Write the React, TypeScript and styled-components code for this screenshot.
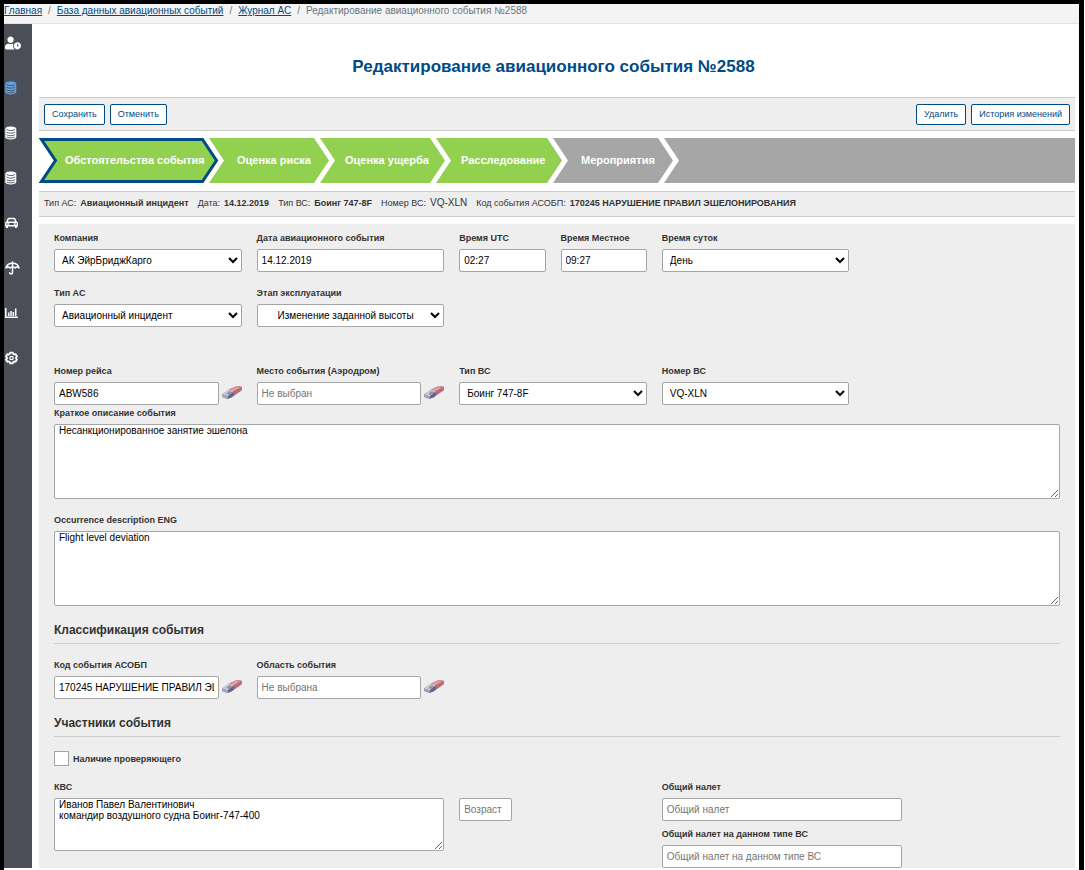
import React from "react";
import styled, { createGlobalStyle } from "styled-components";
import { FaUserClock } from "react-icons/fa";

const blue = "#004a86";
const green = "#92d050";
const grey = "#a6a6a6";

const GlobalStyle = createGlobalStyle`
  *, *::before, *::after { box-sizing: border-box; }
  html, body { height: 100%; margin: 0; overflow: hidden; }
  body { background: #fff; font-family: "Liberation Sans", Arial, sans-serif; font-size: 10px; color: #333; }
  #root { height: 100%; }
  input, textarea, select, button { font-family: inherit; margin: 0; }
`;

const Frame = styled.div`
  height: 100%;
  margin-right: 1px;
  border: solid #000;
  border-width: 4px 5px 0 4px;
  padding-bottom: 2px;
  background: #fff;
  display: flex;
  flex-direction: column;
`;

const Crumbs = styled.nav`
  flex: none;
  height: 20px;
  padding-bottom: 6px;
  display: flex;
  align-items: center;
  gap: 6px;
  overflow: hidden;
  white-space: nowrap;
  background: #f4f4f4;
  border-bottom: 1px solid #e0e0e0;
  font-size: 10px;
  line-height: 13px;
  color: #6c757d;
  a { color: ${blue}; text-decoration: underline; }
`;

const Body = styled.div`
  flex: 1;
  min-height: 0;
  display: flex;
`;

const Sidebar = styled.nav`
  flex: none;
  width: 28px;
  background: #4b4e57;
  padding: 11px 0 0 1px;
  display: flex;
  flex-direction: column;
  gap: 29px;
`;

const SideLink = styled.a<{ $active?: boolean }>`
  display: flex;
  align-items: center;
  height: 16px;
  color: ${p => (p.$active ? "#5ea4e6" : "#fff")};
`;

const Main = styled.main`
  flex: 1;
  min-width: 0;
  padding: 0 4px 0 7px;
  display: flex;
  flex-direction: column;
`;

const Title = styled.h1`
  flex: none;
  margin: 0;
  padding: 32px 7px 20px 0;
  text-align: center;
  font-size: 17px;
  line-height: 21px;
  color: ${blue};
`;

const Toolbar = styled.div`
  flex: none;
  height: 34px;
  padding: 0 5px;
  display: flex;
  align-items: center;
  justify-content: space-between;
  background: #eee;
  border: solid #ccc;
  border-width: 1px 0;
`;

const ButtonGroup = styled.div`
  display: flex;
  gap: 5px;
`;

const Button = styled.button`
  height: 21px;
  padding: 0 7px 1px;
  border: 1px solid ${blue};
  border-radius: 2px;
  background: #fff;
  color: ${blue};
  font-size: 9px;
  line-height: 12px;
  white-space: nowrap;
`;

const Steps = styled.ol`
  flex: none;
  list-style: none;
  margin: 7px 0 8px;
  padding: 0;
  height: 45px;
  display: flex;
  background: ${grey};
`;

const Step = styled.li<{ $done?: boolean; $w: number }>`
  position: relative;
  flex: none;
  width: ${p => p.$w}px;
  background: ${p => (p.$done ? green : grey)};
  display: flex;
  svg { position: absolute; top: 0; z-index: 1; pointer-events: none; }
`;

const StepButton = styled.button<{ $pad: number }>`
  position: relative;
  z-index: 2;
  border: 0;
  padding: 0 0 1px ${p => p.$pad}px;
  background: none;
  color: #fff;
  font-size: 11px;
  font-weight: bold;
  white-space: nowrap;
`;

const Summary = styled.dl`
  flex: none;
  height: 26px;
  margin: 0 0 7px;
  padding: 0 5px 2px;
  display: flex;
  align-items: center;
  gap: 9px;
  background: #eee;
  border: solid #ccc;
  border-width: 1px 0;
  font-size: 9px;
  line-height: 12px;
  white-space: nowrap;
  div { display: flex; align-items: baseline; gap: 4px; }
  dt { margin: 0; }
`;

const SummaryValue = styled.dd<{ $plain?: boolean }>`
  margin: 0;
  font-size: ${p => (p.$plain ? 10 : 9)}px;
  font-weight: ${p => (p.$plain ? "normal" : "bold")};
`;

const Form = styled.form`
  flex: 1;
  min-height: 0;
  overflow: hidden;
  background: #eee;
  padding: 7px 15px 0;
`;

const Row = styled.div<{ $h: number }>`
  display: grid;
  grid-template-columns: repeat(10, minmax(0, 1fr));
  column-gap: 15px;
  align-items: start;
  padding-right: 8px;
  min-height: ${p => p.$h}px;
`;

const Cell = styled.div<{ $span?: number }>`
  grid-column: span ${p => p.$span ?? 2};
`;

const Label = styled.label`
  display: block;
  padding-bottom: 4px;
  font-size: 9px;
  line-height: 14px;
  font-weight: bold;
  white-space: nowrap;
`;

const Input = styled.input`
  display: block;
  width: 100%;
  min-width: 0;
  height: 23px;
  padding: 0 4px;
  border: 1px solid #a6a6a6;
  border-radius: 2px;
  background: #fff;
  color: #000;
  font-size: 10px;
  &::placeholder { color: #757575; opacity: 1; }
`;

const Select = styled.select<{ $indent?: boolean }>`
  display: block;
  width: 100%;
  height: 23px;
  padding: 0 0 0 ${p => (p.$indent ? 16 : 3)}px;
  border: 1px solid #a6a6a6;
  border-radius: 2px;
  background: #fff;
  color: #000;
  font-size: 10px;
`;

const TextArea = styled.textarea<{ $h: number }>`
  display: block;
  width: 100%;
  height: ${p => p.$h}px;
  padding: 0 4px;
  border: 1px solid #a6a6a6;
  border-radius: 2px;
  background: #fff;
  color: #000;
  font-size: 10px;
  line-height: 11px;
  resize: both;
`;

const Block = styled.div<{ $gap: number }>`
  padding-bottom: ${p => p.$gap}px;
`;

const SectionTitle = styled.h2`
  margin: 0 0 14px;
  height: 28px;
  border-bottom: 1px solid #ccc;
  font-size: 12px;
  line-height: 16px;
  padding-top: 6px;
`;

const Erasable = styled.div`
  display: flex;
  align-items: center;
  gap: 3px;
`;

const EraseButton = styled.button`
  flex: none;
  width: 20px;
  padding: 0 0 2px;
  border: 0;
  background: none;
  display: flex;
`;

const Check = styled.div`
  display: flex;
  align-items: center;
  gap: 4px;
  padding-bottom: 14px;
  input {
    appearance: none;
    width: 15px;
    height: 15px;
    margin: 0;
    border: 1px solid #a6a6a6;
    background: #fff;
  }
  label { padding: 0; }
`;

const Narrow = styled.div`
  width: 53px;
  padding-top: 18px;
`;

const Totals = styled.div`
  width: 240px;
`;

const DatabaseIcon = () => (
  <svg width="12" height="14" viewBox="0 0 12 14" fill="currentColor">
    <path d="M.3 3C.3-.3 11.300-.3 11.300 3v8c0 3.300-11 3.300-11 0z" />
    <path d="M1.500 3.400c1.800 1.500 6.800 1.500 8.600 0M1.500 6c1.800 1.500 6.800 1.500 8.600 0M1.500 8.600c1.800 1.500 6.800 1.500 8.600 0M2 11c1.800 1.200 5.800 1.200 7.600 0" fill="none" stroke="#4b4e57" strokeWidth="0.9" />
  </svg>
);

const CarIcon = () => (
  <svg width="13" height="12" viewBox="0 0 13 12" fill="none" stroke="currentColor" strokeWidth="1.400">
    <path d="M2 5 3 2.200Q3.300 1.500 4 1.500h5q.7 0 1 .7L11 5" />
    <path d="M1.500 5.200h10q.7 0 .7.8v2.800H.8V6q0-.8.7-.8z" />
    <path d="M2 9v2M11 9v2" strokeWidth="2" />
    <path d="M2.300 7h2M8.700 7h2" />
  </svg>
);

const UmbrellaIcon = () => (
  <svg width="15" height="14" viewBox="0 0 15 14" fill="none" stroke="currentColor" strokeWidth="1.500" strokeLinecap="round" strokeLinejoin="round">
    <path d="M1 7C1.800 3.700 4.300 2.300 7.500 2.300S13.200 3.700 14 7c-1.500-1.400-2.900-1.400-4 0-1.400-1.800-3.600-1.800-5 0-1.100-1.400-2.500-1.400-4 0z" />
    <path d="M7.500 1v10.500c0 2-2.800 2-2.800.2" />
  </svg>
);

const ChartIcon = () => (
  <svg width="13" height="12" viewBox="0 0 13 12" fill="none" stroke="currentColor">
    <path d="M.8 1v9.300h12" strokeWidth="1.500" />
    <path d="M3.700 9V5.500M6 9V4M8.300 9V5M10.700 9V1.500" strokeWidth="1.500" />
  </svg>
);

const GearIcon = () => (
  <svg width="13" height="14" viewBox="0 0 14 14" fill="none" stroke="currentColor">
    <path d="M5.600 1.200h2.800l.5 1.500 1 .6 1.600-.4 1.400 2.400L11.800 6.500v1l1.100 1.200-1.400 2.400-1.600-.4-1 .6-.5 1.500H5.600l-.5-1.500-1-.6-1.600.4L1.100 8.700l1.100-1.200v-1L1.100 5.300l1.400-2.400 1.600.4 1-.6z" strokeWidth="1.900" strokeLinejoin="round" />
    <circle cx="7" cy="7" r="1.800" strokeWidth="1.400" />
  </svg>
);

const EraserIcon = () => (
  <svg width="20" height="13" viewBox="0 0 20 13">
    <path d="M0 8.500 7.500 3.200 13.500.4Q19.500-.4 20 1.200l-.2 3L9.500 11.500 5.500 13 .4 11.200z" fill="#8a8494" />
    <path d="M.4 8.600 7.300 3.500l4.400 2-5.600 4.700z" fill="#c9ccd8" />
    <path d="M7.300 3.500 13.500.7q5-.9 6.200.4l-8 4.600z" fill="#dd8488" />
    <path d="m8.600 4 6-2.700 2.200.2-6.400 3.400z" fill="#eba9aa" />
    <path d="m11.700 5.600 8.100-4.500-.1 3-8.100 5.400z" fill="#bb6c74" />
    <path d="m6.100 10.200 5.600-4.700-.1 4.200-2.200 1.600-3.900 1.500z" fill="#5b6388" />
    <path d="m4.500 7.500 3-2.400 3 1.300-3.700 3.100z" fill="#8d94b4" />
    <path d="m.4 8.800 5.700 1.500-.6 2.500-5-1.800z" fill="#a3a8bd" />
  </svg>
);

const Chevron = ({ left, fill }: { left: number; fill: string }) => (
  <svg style={{ left }} width="22" height="45" viewBox="0 0 22 45">
    <path d="M0 0 15 22.500 0 45z" fill={fill} />
    <path d="M0 0h6l15 22.500L6 45H0l15-22.500z" fill="#fff" />
  </svg>
);

const steps = [
  { name: "Обстоятельства события", w: 169, pad: 26, done: true },
  { name: "Оценка риска", w: 111, pad: 29, done: true },
  { name: "Оценка ущерба", w: 116, pad: 26, done: true },
  { name: "Расследование", w: 117, pad: 26, done: true },
  { name: "Мероприятия", w: 111, pad: 29, done: false },
];

type FieldProps = { id: string; label: string; value?: string; placeholder?: string };

const TextField = ({ id, label, value, placeholder }: FieldProps) => (
  <>
    <Label htmlFor={id}>{label}</Label>
    <Input id={id} defaultValue={value} placeholder={placeholder} />
  </>
);

const ErasableField = ({ id, label, value, placeholder }: FieldProps) => (
  <>
    <Label htmlFor={id}>{label}</Label>
    <Erasable>
      <Input id={id} defaultValue={value} placeholder={placeholder} />
      <EraseButton type="button" aria-label={`Очистить: ${label}`}><EraserIcon /></EraseButton>
    </Erasable>
  </>
);

const SelectField = ({ id, label, value, indent }: FieldProps & { indent?: boolean }) => (
  <>
    <Label htmlFor={id}>{label}</Label>
    <Select id={id} $indent={indent}><option>{value}</option></Select>
  </>
);

export default function App() {
  return (
    <>
      <GlobalStyle />
      <Frame>
        <Crumbs>
          <a href="#home">Главная</a><span>/</span>
          <a href="#db">База данных авиационных событий</a><span>/</span>
          <a href="#journal">Журнал АС</a><span>/</span>
          <span>Редактирование авиационного события №2588</span>
        </Crumbs>
        <Body>
          <Sidebar>
            <SideLink href="#users" aria-label="Пользователи"><FaUserClock size={16} /></SideLink>
            <SideLink href="#events" aria-label="События" $active><DatabaseIcon /></SideLink>
            <SideLink href="#data1" aria-label="База данных"><DatabaseIcon /></SideLink>
            <SideLink href="#data2" aria-label="Справочники"><DatabaseIcon /></SideLink>
            <SideLink href="#cars" aria-label="Транспорт"><CarIcon /></SideLink>
            <SideLink href="#safety" aria-label="Безопасность"><UmbrellaIcon /></SideLink>
            <SideLink href="#charts" aria-label="Отчёты"><ChartIcon /></SideLink>
            <SideLink href="#settings" aria-label="Настройки"><GearIcon /></SideLink>
          </Sidebar>
          <Main>
            <Title>Редактирование авиационного события №2588</Title>
            <Toolbar>
              <ButtonGroup><Button>Сохранить</Button><Button>Отменить</Button></ButtonGroup>
              <ButtonGroup><Button>Удалить</Button><Button>История изменений</Button></ButtonGroup>
            </Toolbar>
            <Steps>
              {steps.map((s, i) => (
                <Step key={s.name} $w={s.w} $done={s.done}>
                  <StepButton type="button" $pad={s.pad}>{s.name}</StepButton>
                  <Chevron left={s.w - 5} fill={s.done ? green : grey} />
                  {i === 0 && (
                    <svg style={{ left: 0 }} width="181" height="45" viewBox="0 0 181 45">
                      <path d="M0 0v45l15-22.500z" fill="#fff" />
                      <path d="M2.500 1.500h161l14 21-14 21h-161l14-21z" fill="none" stroke={blue} strokeWidth="3" />
                    </svg>
                  )}
                </Step>
              ))}
            </Steps>
            <Summary>
              <div><dt>Тип АС:</dt><SummaryValue>Авиационный инцидент</SummaryValue></div>
              <div><dt>Дата:</dt><SummaryValue>14.12.2019</SummaryValue></div>
              <div><dt>Тип ВС:</dt><SummaryValue>Боинг 747-8F</SummaryValue></div>
              <div><dt>Номер ВС:</dt><SummaryValue $plain>VQ-XLN</SummaryValue></div>
              <div><dt>Код события АСОБП:</dt><SummaryValue>170245 НАРУШЕНИЕ ПРАВИЛ ЭШЕЛОНИРОВАНИЯ</SummaryValue></div>
            </Summary>
            <Form>
              <Row $h={55}>
                <Cell><SelectField id="company" label="Компания" value="АК ЭйрБриджКарго" /></Cell>
                <Cell><TextField id="date" label="Дата авиационного события" value="14.12.2019" /></Cell>
                <Cell $span={1}><TextField id="utc" label="Время UTC" value="02:27" /></Cell>
                <Cell $span={1}><TextField id="local" label="Время Местное" value="09:27" /></Cell>
                <Cell><SelectField id="daytime" label="Время суток" value="День" /></Cell>
              </Row>
              <Row $h={78}>
                <Cell><SelectField id="kind" label="Тип АС" value="Авиационный инцидент" /></Cell>
                <Cell><SelectField id="phase" label="Этап эксплуатации" value="Изменение заданной высоты" indent /></Cell>
              </Row>
              <Row $h={42}>
                <Cell><ErasableField id="flight" label="Номер рейса" value="ABW586" /></Cell>
                <Cell><ErasableField id="place" label="Место события (Аэродром)" placeholder="Не выбран" /></Cell>
                <Cell><SelectField id="aircraft" label="Тип ВС" value="Боинг 747-8F" /></Cell>
                <Cell><SelectField id="tail" label="Номер ВС" value="VQ-XLN" /></Cell>
              </Row>
              <Block $gap={14}>
                <Label htmlFor="descRu">Краткое описание события</Label>
                <TextArea id="descRu" $h={75} defaultValue="Несанкционированное занятие эшелона" />
              </Block>
              <Block $gap={10}>
                <Label htmlFor="descEn">Occurrence description ENG</Label>
                <TextArea id="descEn" $h={75} defaultValue="Flight level deviation" />
              </Block>
              <SectionTitle>Классификация события</SectionTitle>
              <Row $h={51}>
                <Cell><ErasableField id="code" label="Код события АСОБП" value="170245 НАРУШЕНИЕ ПРАВИЛ ЭШЕЛОНИРОВАНИЯ" /></Cell>
                <Cell><ErasableField id="area" label="Область события" placeholder="Не выбрана" /></Cell>
              </Row>
              <SectionTitle>Участники события</SectionTitle>
              <Check>
                <input type="checkbox" id="inspector" />
                <Label htmlFor="inspector">Наличие проверяющего</Label>
              </Check>
              <Row $h={88}>
                <Cell $span={4}>
                  <Label htmlFor="pic">КВС</Label>
                  <TextArea id="pic" $h={53} defaultValue={"Иванов Павел Валентинович\nкомандир воздушного судна Боинг-747-400"} />
                </Cell>
                <Cell>
                  <Narrow><Input aria-label="Возраст" placeholder="Возраст" /></Narrow>
                </Cell>
                <Cell>
                  <Totals>
                    <Block $gap={6}><TextField id="hours" label="Общий налет" placeholder="Общий налет" /></Block>
                    <TextField id="typeHours" label="Общий налет на данном типе ВС" placeholder="Общий налет на данном типе ВС" />
                  </Totals>
                </Cell>
              </Row>
            </Form>
          </Main>
        </Body>
      </Frame>
    </>
  );
}
